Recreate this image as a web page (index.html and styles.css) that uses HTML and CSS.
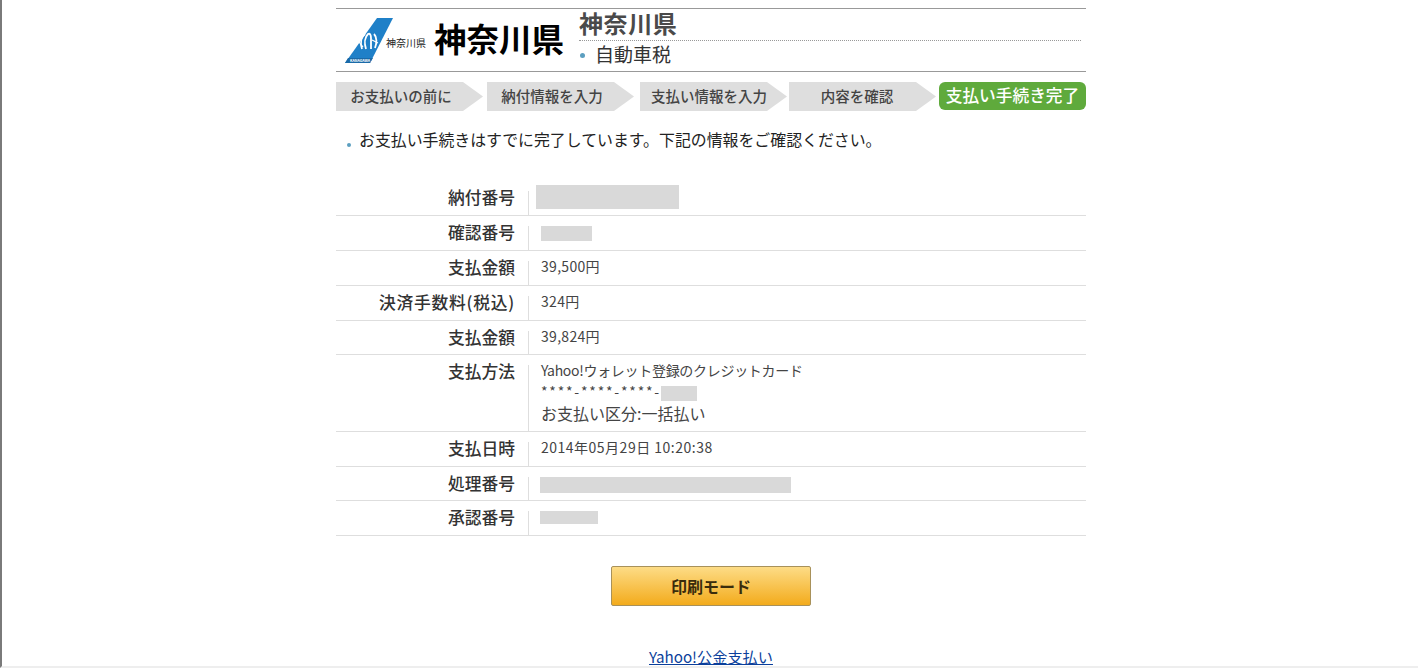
FILE: index.html
```html
<!DOCTYPE html>
<html lang="ja">
<head>
  <meta charset="utf-8">
  <title>お支払い手続き完了</title>
  <link rel="stylesheet" href="styles.css">
</head>
<body>
  <div class="container">
    <div class="header">
      <div class="logo">
        <svg class="logo-mark" width="48" height="46" viewBox="0 0 48 46">
          <polygon points="32,0 48,0 25,45 0,45" fill="#1f80c8"/>
          <polygon points="3,40 28,40 25,45 0,45" fill="#1a6aa8"/>
          <text x="5" y="44" font-size="3.6" font-weight="700" fill="#fff">KANAGAWA</text>
          <path d="M17 31 C15 25 16 19 20 16 M21 31 C19 25 20 19 23 16 C25 15 26 17 26 20 L26 31 M30 30 C32 25 32 19 29 16" fill="none" stroke="#fff" stroke-width="1.8"/>
          <path d="M14 24 L18 29 M27 22 L33 25" fill="none" stroke="#fff" stroke-width="1.2"/>
        </svg>
        <span class="logo-small">神奈川県</span>
        <span class="logo-large">神奈川県</span>
      </div>
      <div class="header-title">
        <div class="pref-name">神奈川県</div>
        <div class="tax-name"><span class="dot"></span>自動車税</div>
      </div>
    </div>

    <div class="steps">
      <div class="step">お支払いの前に</div>
      <div class="step step-2">納付情報を入力</div>
      <div class="step step-3">支払い情報を入力</div>
      <div class="step step-4">内容を確認</div>
      <div class="step step-done">支払い手続き完了</div>
    </div>

    <p class="notice"><span class="dot"></span>お支払い手続きはすでに完了しています。下記の情報をご確認ください。</p>

    <div class="details">
      <div class="row">
        <div class="row-label">納付番号</div>
        <div class="row-value"><span class="mask mask-receipt"></span></div>
      </div>
      <div class="row">
        <div class="row-label">確認番号</div>
        <div class="row-value"><span class="mask mask-confirm"></span></div>
      </div>
      <div class="row">
        <div class="row-label">支払金額</div>
        <div class="row-value"><div class="value-text">39,500円</div></div>
      </div>
      <div class="row">
        <div class="row-label row-label-wide">決済手数料(税込)</div>
        <div class="row-value"><div class="value-text">324円</div></div>
      </div>
      <div class="row row-short">
        <div class="row-label">支払金額</div>
        <div class="row-value"><div class="value-text">39,824円</div></div>
      </div>
      <div class="row row-method">
        <div class="row-label">支払方法</div>
        <div class="row-value">
          <div class="value-text value-method">Yahoo!ウォレット登録のクレジットカード</div>
          <div class="value-card">****-****-****-<span class="mask mask-card"></span></div>
          <div class="value-plan">お支払い区分:一括払い</div>
        </div>
      </div>
      <div class="row">
        <div class="row-label">支払日時</div>
        <div class="row-value"><div class="value-text value-date">2014年05月29日 10:20:38</div></div>
      </div>
      <div class="row row-short">
        <div class="row-label">処理番号</div>
        <div class="row-value"><span class="mask mask-process"></span></div>
      </div>
      <div class="row">
        <div class="row-label">承認番号</div>
        <div class="row-value"><span class="mask mask-approve"></span></div>
      </div>
    </div>

    <div class="button-group">
      <button class="print-button">印刷モード</button>
    </div>

    <div class="footer-link"><a href="#">Yahoo!公金支払い</a></div>
  </div>
</body>
</html>
```

FILE: styles.css
```css
:root {
  --jp-font: "Noto Sans CJK JP", "Noto Sans", sans-serif;
  --line: #dedede;
  --mask: #d9d9d9;
  --bullet: #5c9fc0;
}

html, body {
  margin: 0;
  height: 668px;
  overflow: hidden;
  background: #fff;
}

body {
  box-sizing: border-box;
  border-left: 2px solid #7a7a7a;
  border-bottom: 2px solid #eee;
  font-family: var(--jp-font);
  color: #333;
}

.container {
  width: 750px;
  margin-left: 334px;
  padding-top: 8px;
}

.dot {
  display: inline-block;
  width: 5px;
  height: 5px;
  border-radius: 50%;
  background: var(--bullet);
}

/* header */
.header {
  display: flex;
  height: 62px;
  border-top: 1px solid #999;
  border-bottom: 1px solid #999;
}

.logo {
  display: flex;
  align-items: center;
  width: 243px;
  padding-left: 9px;
  box-sizing: border-box;
  flex-shrink: 0;
}

.logo-mark {
  flex-shrink: 0;
  margin-top: 2px;
}

.logo-small {
  margin-left: -7px;
  margin-top: 6px;
  font-size: 10px;
  line-height: 12px;
  white-space: nowrap;
  color: #222;
}

.logo-large {
  margin-left: 8px;
  margin-top: -4px;
  font-size: 32.5px;
  line-height: 40px;
  font-weight: 700;
  white-space: nowrap;
  color: #000;
}

.header-title {
  flex: 1;
  margin-right: 5px;
}

.pref-name {
  height: 31px;
  border-bottom: 1px dotted #999;
  font-size: 24px;
  line-height: 28px;
  letter-spacing: 0.6px;
  font-weight: 700;
  color: #4a4a4a;
}

.tax-name {
  font-size: 19px;
  line-height: 26px;
  color: #333;
}

.tax-name .dot {
  margin: 0 10px 3px 1px;
  vertical-align: middle;
}

/* steps */
.steps {
  display: flex;
  margin-top: 10px;
}

.step {
  width: 147px;
  height: 29px;
  padding-right: 17px;
  box-sizing: border-box;
  background: #dedede;
  clip-path: polygon(0 0, 127px 0, 100% 50%, 127px 100%, 0 100%);
  font-size: 14.5px;
  font-weight: 500;
  line-height: 28px;
  text-align: center;
  white-space: nowrap;
  color: #444;
}

.step-2 { margin-left: 4px; }
.step-3 { margin-left: 6px; padding-right: 9px; }
.step-4 { margin-left: 2px; padding-right: 11px; }

.step-done {
  margin-left: 3px;
  height: 28px;
  padding-right: 0;
  clip-path: none;
  border-radius: 6px;
  background: #5faa3c;
  font-size: 16.7px;
  line-height: 27px;
  color: #fff;
}

/* notice */
.notice {
  margin: 17px 0 0;
  font-size: 15.9px;
  line-height: 24px;
  color: #222;
  white-space: nowrap;
}

.notice .dot {
  width: 4px;
  height: 4px;
  margin: 0 8px 0 11px;
  vertical-align: -1px;
}

/* details */
.details {
  margin-top: 29px;
}

.row {
  display: flex;
  padding-top: 10px;
  border-bottom: 1px solid var(--line);
  min-height: 24px;
}

.row-short {
  min-height: 23px;
}

.row-label {
  width: 179px;
  flex-shrink: 0;
  margin-top: -2px;
  text-align: right;
  font-size: 16.75px;
  font-weight: 500;
  line-height: 16px;
  color: #333;
  white-space: nowrap;
}

.row-label-wide {
  letter-spacing: 0.75px;
}

.row-value {
  flex: 1;
  margin-left: 13px;
  padding-left: 12px;
  border-left: 1px solid var(--line);
  font-size: 14px;
  line-height: 21px;
  color: #444;
}

.row-method {
  min-height: 66px;
}

.value-text {
  margin-top: -5px;
  letter-spacing: 0.3px;
}

.value-method {
  letter-spacing: -0.3px;
}

.value-date {
  letter-spacing: 0.5px;
}

.value-card {
  letter-spacing: 1.8px;
}

.value-plan {
  margin-top: 1px;
  font-size: 16px;
  line-height: 20px;
}

.mask {
  display: inline-block;
  background: var(--mask);
}

.mask-receipt {
  width: 143px;
  height: 24px;
  margin: -6px 0 0 -5px;
  vertical-align: top;
}

.mask-confirm {
  width: 51px;
  height: 15px;
  vertical-align: top;
}

.mask-card {
  width: 36px;
  height: 15px;
  vertical-align: middle;
}

.mask-process {
  width: 251px;
  height: 16px;
  margin-left: -1px;
  vertical-align: top;
}

.mask-approve {
  width: 58px;
  height: 13px;
  margin-left: -1px;
  vertical-align: top;
}

/* button and link */
.button-group {
  display: flex;
  justify-content: center;
  margin-top: 30px;
}

.print-button {
  width: 200px;
  height: 40px;
  border: 1px solid #a8915a;
  border-radius: 2px;
  background: linear-gradient(#fddc86, #f3ab1c);
  font-family: var(--jp-font);
  font-size: 16px;
  font-weight: 700;
  color: #3a2c0c;
  cursor: pointer;
}

.footer-link {
  margin-top: 39px;
  text-align: center;
  font-size: 15.2px;
  line-height: 22px;
}

.footer-link a {
  color: #0b3f9b;
}
```
